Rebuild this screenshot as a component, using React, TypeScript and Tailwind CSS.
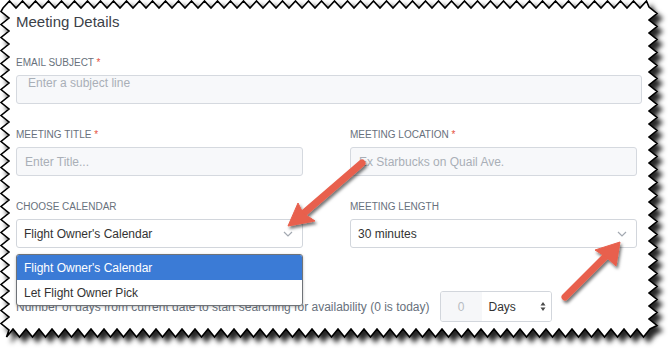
import React from "react";

// torn paper outline, zigzag on all four sides
function paperPoints() {
  const pts: string[] = [];
  let i = 0;
  for (let x = 3; x <= 650; x += 6.5, i++) pts.push(`${x},${i % 2 ? 1 : 8}`);
  i = 0;
  for (let y = 7; y <= 331; y += 6.5, i++) pts.push(`${i % 2 ? 657 : 649},${y}`);
  i = 0;
  for (let x = 650; x >= 3; x -= 6.5, i++) pts.push(`${x},${i % 2 ? 337 : 329}`);
  i = 0;
  for (let y = 330; y >= 7; y -= 6.5, i++) pts.push(`${i % 2 ? 1 : 9},${y}`);
  return pts.join(" ");
}

function Label({ text, required }: { text: string; required?: boolean }) {
  return (
    <div className="text-[10px] leading-[12px] text-[#68717c] mb-[6px]">
      {text}
      {required && <span className="text-[#e5533d]"> *</span>}
    </div>
  );
}

function Chevron() {
  return (
    <svg width="10" height="6" viewBox="0 0 10 6" className="shrink-0">
      <path d="M1 1l4 4 4-4" fill="none" stroke="#a3a9b1" strokeWidth="1.2" />
    </svg>
  );
}

function Select({ value }: { value: string }) {
  return (
    <div className="flex h-[29px] items-center justify-between rounded-[3px] border border-[#d2d6dc] bg-white pl-[7px] pr-[9px] text-[12px] text-[#333]">
      <span>{value}</span>
      <Chevron />
    </div>
  );
}

function Input({ placeholder }: { placeholder: string }) {
  return (
    <div className="flex h-[29px] items-center rounded-[3px] border border-[#d5d9df] bg-[#f7f8fa] px-[8px] text-[12px] text-[#a9afb7]">
      {placeholder}
    </div>
  );
}

export default function App() {
  return (
    <div className="relative h-[351px] w-[668px] overflow-hidden bg-white font-['Liberation_Sans',Arial,sans-serif]">
      <svg className="absolute inset-0" width="668" height="351">
        <defs>
          <filter id="paper" x="-5%" y="-5%" width="115%" height="115%">
            <feDropShadow dx="5" dy="5" stdDeviation="2.5" floodColor="#000" floodOpacity="0.85" />
          </filter>
        </defs>
        <polygon points={paperPoints()} fill="#fff" stroke="#000" strokeWidth="1.6" filter="url(#paper)" />
      </svg>

      <div className="relative pl-4 pt-3">
        <h2 className="text-[15px] leading-5 text-[#3b4148]">Meeting Details</h2>

        <div className="mt-[25px] w-[626px]">
          <Label text="EMAIL SUBJECT" required />
          <div className="h-[29px] rounded-[3px] border border-[#d5d9df] bg-[#f7f8fa] px-[11px] text-[12px] leading-[14px] text-[#a9afb7]">
            Enter a subject line
          </div>
        </div>

        <div className="mt-[25px] grid w-[621px] grid-cols-[287px_287px] gap-x-[47px] gap-y-[25px]">
          <div>
            <Label text="MEETING TITLE" required />
            <Input placeholder="Enter Title..." />
          </div>
          <div>
            <Label text="MEETING LOCATION" required />
            <Input placeholder="Ex Starbucks on Quail Ave." />
          </div>
          <div>
            <Label text="CHOOSE CALENDAR" />
            <Select value="Flight Owner's Calendar" />
          </div>
          <div>
            <Label text="MEETING LENGTH" />
            <Select value="30 minutes" />
          </div>
        </div>

        <div className="mt-[43px] flex items-center gap-[10px]">
          <span className="text-[12px] text-[#68717c]">
            Number of days from current date to start searching for availability (0 is today)
          </span>
          <div className="flex h-[31px] w-[112px] overflow-hidden rounded-[3px] border border-[#d2d6dc] text-[12px]">
            <div className="flex w-[41px] items-center justify-center bg-[#f6f7f9] text-[#b7bcc2]">0</div>
            <div className="flex flex-1 items-center justify-between bg-white pl-[7px] pr-[5px] text-[#333]">
              <span>Days</span>
              <svg width="6" height="11" viewBox="0 0 6 11">
                <path d="M3 1l2.5 3.5h-5z M3 10l2.5-3.5h-5z" fill="#4a4a4a" />
              </svg>
            </div>
          </div>
        </div>

        {/* open dropdown list */}
        <div className="absolute left-4 top-[254px] w-[287px] overflow-hidden rounded-[3px] border border-[#6f7378] bg-white text-[12px] shadow-[0_1px_3px_rgba(0,0,0,0.25)]">
          <div className="flex h-[25px] items-center bg-[#3b7bd6] px-[7px] text-white">Flight Owner's Calendar</div>
          <div className="flex h-[25px] items-center px-[7px] text-[#333]">Let Flight Owner Pick</div>
        </div>
      </div>

      <svg className="pointer-events-none absolute inset-0" width="668" height="351">
        <defs>
          <filter id="arrow" x="-20%" y="-20%" width="150%" height="150%">
            <feDropShadow dx="1.5" dy="2.5" stdDeviation="1.5" floodColor="#000" floodOpacity="0.55" />
          </filter>
        </defs>
        <g fill="#e8604d" stroke="#e8604d" filter="url(#arrow)">
          <line x1="362" y1="163" x2="304" y2="213" strokeWidth="7" strokeLinecap="round" />
          <polygon points="288,226 298,203 303,213 315,221" strokeWidth="1" strokeLinejoin="round" />
          <line x1="565" y1="297" x2="606" y2="256" strokeWidth="7" strokeLinecap="round" />
          <polygon points="620,242 616,266 606,257 595,250" strokeWidth="1" strokeLinejoin="round" />
        </g>
      </svg>
    </div>
  );
}
